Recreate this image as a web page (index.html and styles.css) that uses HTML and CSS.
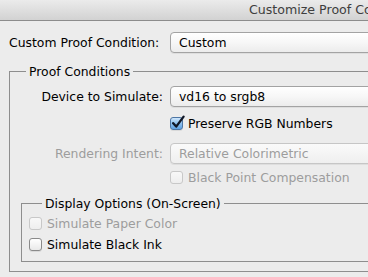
FILE: index.html
```html
<!DOCTYPE html>
<html>
<head>
<meta charset="utf-8">
<link rel="stylesheet" href="styles.css">
</head>
<body>
<div class="window">
  <div class="titlebar"><span class="title">Customize Proof Condition</span></div>
  <div class="content">
    <div class="row row-top">
      <span class="label label-left">Custom Proof Condition:</span>
      <div class="popup"><span>Custom</span></div>
    </div>
    <fieldset class="group outer">
      <legend class="legend outer-legend">Proof Conditions</legend>
      <div class="row">
        <span class="label">Device to Simulate:</span>
        <div class="popup"><span>vd16 to srgb8</span></div>
      </div>
      <div class="row row-check gap-10">
        <span></span>
        <label class="check">
          <span class="cb checked"><svg viewBox="0 0 16 16" width="16" height="16"><path d="M3.2 8.2 L6.2 11.6 L13.6 1.6" fill="none" stroke="#101828" stroke-width="2.3" stroke-linecap="round" stroke-linejoin="round"/></svg></span>
          <span>Preserve RGB Numbers</span>
        </label>
      </div>
      <div class="row gap-13">
        <span class="label disabled">Rendering Intent:</span>
        <div class="popup popup-disabled"><span>Relative Colorimetric</span></div>
      </div>
      <div class="row row-check gap-7">
        <span></span>
        <label class="check disabled">
          <span class="cb cb-disabled"></span>
          <span>Black Point Compensation</span>
        </label>
      </div>
      <fieldset class="group inner">
        <legend class="legend inner-legend">Display Options (On-Screen)</legend>
        <label class="check disabled">
          <span class="cb cb-disabled"></span>
          <span>Simulate Paper Color</span>
        </label>
        <label class="check gap-8">
          <span class="cb"></span>
          <span>Simulate Black Ink</span>
        </label>
      </fieldset>
    </fieldset>
  </div>
</div>
</body>
</html>
```
FILE: styles.css
```css
* { box-sizing: border-box; }
html, body {
  margin: 0;
  padding: 0;
  width: 368px;
  height: 277px;
  overflow: hidden;
  background: #ececec;
}
body {
  font-family: "DejaVu Sans", "Liberation Sans", sans-serif;
  font-size: 12.4px;
  color: #000;
}
.window {
  width: 480px;
}
.titlebar {
  height: 21px;
  background: linear-gradient(#ebebeb, #d2d2d2);
  border-bottom: 1px solid #8c8c8c;
  padding-left: 249px;
  white-space: nowrap;
  overflow: hidden;
  line-height: 20px;
}
.title {
  color: #3e3e3e;
  font-size: 12.6px;
}
.content {
  padding: 11px 0 0 9px;
}
.row {
  display: grid;
  grid-template-columns: 153px 1fr;
  column-gap: 7px;
  align-items: center;
  height: 21px;
}
.row-top {
  grid-template-columns: 154px 1fr;
}
.row-check {
  height: 13px;
}
.gap-7 { margin-top: 7px; }
.gap-8 { margin-top: 8px; }
.gap-10 { margin-top: 10px; }
.gap-13 { margin-top: 13px; }
.label {
  text-align: right;
  white-space: nowrap;
}
.label-left {
  text-align: left;
}
.disabled {
  color: #9d9d9d;
}
.popup {
  height: 21px;
  border: 1px solid #a3a3a3;
  border-radius: 4px;
  background: linear-gradient(#ffffff 0%, #f7f7f7 50%, #ececec 100%);
  box-shadow: 0 1px 0 rgba(0,0,0,0.06);
  padding-left: 8px;
  display: flex;
  align-items: center;
  white-space: nowrap;
}
.popup-disabled {
  border-color: #c6c6c6;
  background: linear-gradient(#fafafa, #efefef);
  color: #9d9d9d;
}
.group {
  margin: 0;
  border: 1px solid #8e8e8e;
  min-width: 0;
}
.outer {
  margin-top: 11px;
  padding: 7px 0 9px 0;
  width: 470px;
}
.legend {
  padding: 0 3px;
  line-height: 15px;
  white-space: nowrap;
}
.outer-legend {
  margin-left: 16px;
}
.inner {
  margin: 12px 0 0 11px;
  padding: 6px 0 10px 7px;
}
.inner-legend {
  margin-left: 13px;
}
.check {
  display: flex;
  align-items: center;
  gap: 5px;
  height: 13px;
  white-space: nowrap;
}
.cb {
  position: relative;
  flex: none;
  width: 13px;
  height: 13px;
  border: 1px solid #8a8a8a;
  border-radius: 3px;
  background: linear-gradient(#ffffff, #e9e9e9);
  box-shadow: 0 1px 0 rgba(0,0,0,0.08);
}
.cb.checked {
  border-color: #4e76a4;
  background: linear-gradient(#cfe6fb 0%, #8cc0ef 50%, #5fa2e4 100%);
}
.cb svg {
  position: absolute;
  left: -1px;
  top: -3px;
}
.cb-disabled {
  border-color: #c8c8c8;
  background: linear-gradient(#f8f8f8, #eeeeee);
  box-shadow: none;
}
```
